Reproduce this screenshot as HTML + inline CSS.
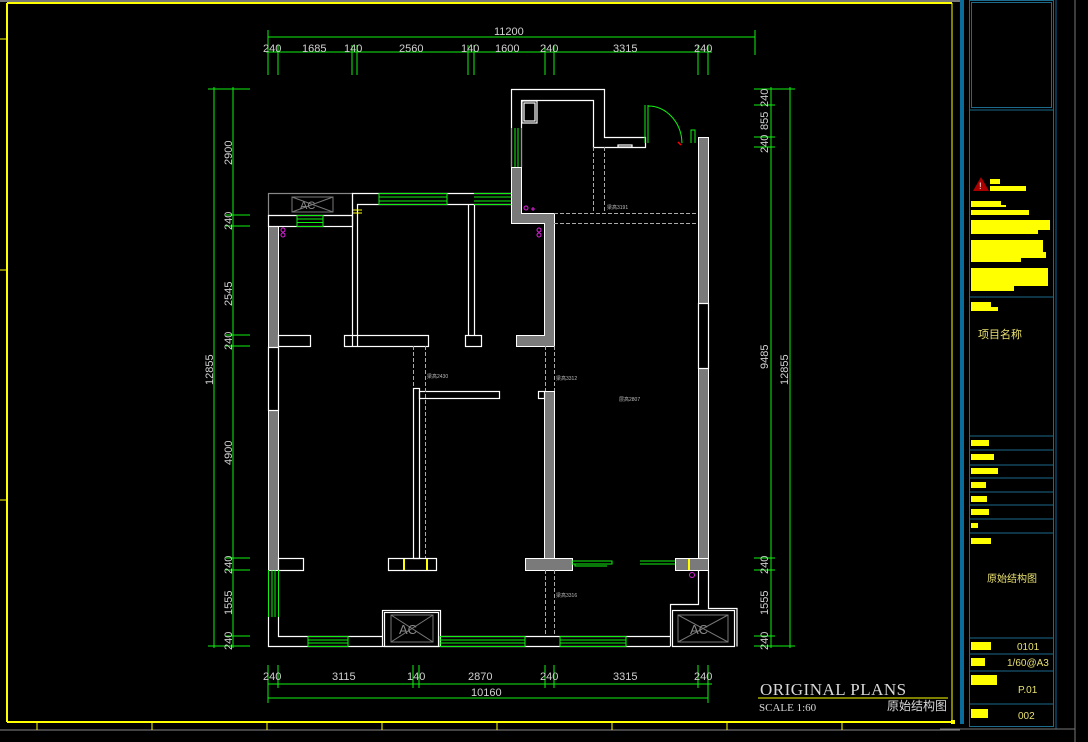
<!DOCTYPE html>
<html><head><meta charset="utf-8"><style>
html,body{margin:0;padding:0;background:#000;width:1088px;height:742px;overflow:hidden}
svg{display:block}
text{font-family:"Liberation Sans","Noto Sans CJK SC",sans-serif}
text.serif{font-family:"Liberation Serif","Noto Serif CJK SC",serif}
</style></head><body>
<svg width="1088" height="742" viewBox="0 0 1088 742" xmlns="http://www.w3.org/2000/svg">
<rect width="1088" height="742" fill="#000"/>
<line x1="0" y1="1" x2="960" y2="1" stroke="#777" stroke-width="2"/>
<line x1="7" y1="3" x2="952" y2="3" stroke="#ffff00" stroke-width="2"/>
<line x1="7" y1="3" x2="7" y2="722" stroke="#ffff00" stroke-width="2"/>
<line x1="7" y1="722" x2="952" y2="722" stroke="#ffff00" stroke-width="2"/>
<line x1="952" y1="3" x2="952" y2="722" stroke="#ffff00" stroke-width="1"/>
<line x1="0" y1="730" x2="960" y2="730" stroke="#888" stroke-width="1"/>
<g stroke="#ffff00" stroke-width="1">
<line x1="37" y1="722" x2="37" y2="730"/><line x1="152" y1="722" x2="152" y2="730"/><line x1="267" y1="722" x2="267" y2="730"/><line x1="382" y1="722" x2="382" y2="730"/><line x1="497" y1="722" x2="497" y2="730"/><line x1="612" y1="722" x2="612" y2="730"/><line x1="727" y1="722" x2="727" y2="730"/><line x1="842" y1="722" x2="842" y2="730"/>
<line x1="0" y1="39" x2="7" y2="39"/><line x1="0" y1="270" x2="7" y2="270"/><line x1="0" y1="500" x2="7" y2="500"/>
</g>
<rect x="960" y="0" width="4" height="724" fill="#0a6c9a"/>
<g fill="none" stroke="#1c6a8c" stroke-width="1">
<rect x="969.5" y="0.5" width="84" height="726"/>
<rect x="971.5" y="2.5" width="80" height="105"/>
<line x1="969" y1="110" x2="1054" y2="110"/>
<line x1="969" y1="297" x2="1054" y2="297"/>
<line x1="969" y1="436" x2="1054" y2="436"/><line x1="969" y1="450" x2="1054" y2="450"/><line x1="969" y1="465" x2="1054" y2="465"/><line x1="969" y1="478" x2="1054" y2="478"/><line x1="969" y1="492" x2="1054" y2="492"/><line x1="969" y1="505" x2="1054" y2="505"/><line x1="969" y1="519" x2="1054" y2="519"/><line x1="969" y1="533" x2="1054" y2="533"/>
<line x1="969" y1="638" x2="1054" y2="638"/><line x1="969" y1="654" x2="1054" y2="654"/><line x1="969" y1="671" x2="1054" y2="671"/><line x1="969" y1="704" x2="1054" y2="704"/>
<line x1="1056" y1="0" x2="1056" y2="729" stroke="#0a6c9a"/>
</g>
<line x1="1075" y1="0" x2="1075" y2="742" stroke="#777"/>
<line x1="940" y1="729" x2="1075" y2="729" stroke="#777"/>
<polygon points="981,177 973,191 989,191" fill="#a00"/>
<text x="979" y="189" font-size="9" fill="#fff">!</text>
<g fill="#ffff00">
<rect x="990" y="179" width="10" height="5"/><rect x="990" y="186" width="36" height="5"/>
<rect x="971" y="201" width="30" height="4"/><rect x="971" y="205" width="35" height="2"/><rect x="971" y="210" width="58" height="5"/>
<rect x="971" y="220" width="79" height="10"/><rect x="971" y="230" width="67" height="4"/>
<rect x="971" y="240" width="72" height="12"/><rect x="971" y="252" width="75" height="6"/><rect x="971" y="258" width="50" height="4"/>
<rect x="971" y="268" width="77" height="12"/><rect x="971" y="280" width="77" height="6"/><rect x="971" y="286" width="43" height="5"/>
<rect x="971" y="302" width="20" height="5"/><rect x="971" y="307" width="27" height="4"/>
<rect x="971" y="440" width="18" height="6"/><rect x="971" y="454" width="23" height="6"/><rect x="971" y="468" width="27" height="6"/><rect x="971" y="482" width="15" height="6"/><rect x="971" y="496" width="16" height="6"/><rect x="971" y="509" width="18" height="6"/><rect x="971" y="523" width="7" height="5"/><rect x="971" y="538" width="20" height="6"/>
<rect x="971" y="642" width="20" height="8"/><rect x="971" y="658" width="14" height="8"/><rect x="971" y="675" width="26" height="10"/><rect x="971" y="709" width="17" height="9"/>
</g>
<g fill="#e8e070" font-size="10">
<text x="978" y="338" font-size="11">项目名称</text>
<text x="987" y="582" font-size="10">原始结构图</text>
<text x="1017" y="650">0101</text>
<text x="1007" y="666">1/60@A3</text>
<text x="1018" y="693">P.01</text>
<text x="1018" y="719">002</text>
</g>
<g stroke="#10f010" stroke-width="1" fill="none">
<line x1="268" y1="37" x2="755" y2="37"/><line x1="268" y1="30" x2="268" y2="55"/><line x1="755" y1="30" x2="755" y2="55"/>
<line x1="266" y1="52" x2="712" y2="52"/>
<path d="M268 45V75M278 45V75M352 45V75M357 45V75M468 45V75M474 45V75M545 45V75M554 45V75M698 45V75M708 45V75"/>
<line x1="268" y1="684" x2="712" y2="684"/><line x1="268" y1="698" x2="708" y2="698"/>
<path d="M268 665V703M278 665V688M413 665V688M419 665V688M545 665V688M554 665V688M698 665V688M708 665V703"/>
<line x1="214" y1="87" x2="214" y2="648"/><line x1="233" y1="87" x2="233" y2="648"/>
<path d="M208 89H250M226 215H250M226 226H250M226 335H250M226 346H250M226 558H250M226 570H250M226 636H250M208 646H250"/>
<line x1="771" y1="87" x2="771" y2="648"/><line x1="790" y1="87" x2="790" y2="648"/>
<path d="M754 89H795M754 105H775M754 137H775M754 147H775M754 558H775M754 570H775M754 636H775M754 646H795"/>
</g>
<g fill="#d0d0d0" font-size="11">
<text x="494" y="35">11200</text>
<text x="263" y="52">240</text><text x="302" y="52">1685</text><text x="344" y="52">140</text><text x="399" y="52">2560</text><text x="461" y="52">140</text><text x="495" y="52">1600</text><text x="540" y="52">240</text><text x="613" y="52">3315</text><text x="694" y="52">240</text>
<text x="263" y="680">240</text><text x="332" y="680">3115</text><text x="407" y="680">140</text><text x="468" y="680">2870</text><text x="540" y="680">240</text><text x="613" y="680">3315</text><text x="694" y="680">240</text>
<text x="471" y="696">10160</text>
<g transform="rotate(-90)">
<text x="-165" y="232">2900</text><text x="-230" y="232">240</text><text x="-306" y="232">2545</text><text x="-350" y="232">240</text><text x="-465" y="232">4900</text><text x="-574" y="232">240</text><text x="-615" y="232">1555</text><text x="-650" y="232">240</text>
<text x="-385" y="213">12855</text>
<text x="-107" y="768">240</text><text x="-130" y="768">855</text><text x="-153" y="768">240</text><text x="-369" y="768">9485</text><text x="-574" y="768">240</text><text x="-615" y="768">1555</text><text x="-650" y="768">240</text>
<text x="-385" y="788">12855</text>
</g>
</g>
<g fill="#7a7a7a" stroke="#fff" stroke-width="1">
<rect x="268.5" y="226.5" width="10" height="121"/>
<rect x="268.5" y="410.5" width="10" height="160"/>
<path d="M511.5 167.5H521.5V213.5H554.5V346.5H516.5V335.5H544.5V223.5H511.5Z"/>
<rect x="698.5" y="137.5" width="10" height="166"/>
<rect x="698.5" y="368.5" width="10" height="202"/>
<rect x="544.5" y="391.5" width="10" height="167"/>
<rect x="525.5" y="558.5" width="47" height="12"/>
<rect x="675.5" y="558.5" width="33" height="12"/>
</g>
<g fill="none" stroke="#fff" stroke-width="1.2">
<path d="M511.5 167.5V89.5H604.5V137.5H645.5V147.5H593.5V100.5H521.5V167.5"/>
<rect x="522" y="101" width="15" height="22"/><rect x="524" y="103" width="11" height="18"/>
<rect x="268.5" y="193.5" width="84" height="22" stroke="#888"/>
<rect x="268.5" y="215.5" width="84" height="11"/>
<path d="M352.5 346V193.5H511.5M357.5 346V204.5H511.5"/>
<path d="M468.5 204V335M474.5 204V335"/>
<rect x="268.5" y="347.5" width="10" height="63"/>
<rect x="278.5" y="335.5" width="32" height="11"/>
<rect x="344.5" y="335.5" width="84" height="11"/>
<rect x="465.5" y="335.5" width="16" height="11"/>
<rect x="698.5" y="303.5" width="10" height="65"/>
<path d="M268.5 617V646.5H382M278.5 617V636.5H382"/>
<path d="M441 646.5H670M441 636.5H670"/>
<path d="M737 646.5H737V608.5H708.5V570M698.5 570V604.5H670.5V646.5"/>
<rect x="382.5" y="610.5" width="58" height="36"/><rect x="384.5" y="612.5" width="54" height="34"/>
<rect x="672.5" y="610.5" width="62" height="36"/>
<rect x="413.5" y="388.5" width="6" height="170"/>
<rect x="419.5" y="391.5" width="80" height="7"/>
<rect x="538.5" y="391.5" width="6" height="7"/>
<rect x="278.5" y="558.5" width="25" height="12"/>
<rect x="388.5" y="558.5" width="48" height="12"/>
<rect x="618" y="145" width="14" height="2"/>
</g>
<g fill="none" stroke="#777" stroke-width="1">
<rect x="292" y="197" width="41" height="15"/><path d="M292 197L333 212M333 197L292 212"/>
<rect x="391" y="615" width="42" height="27"/><path d="M391 615L433 642M433 615L391 642"/>
<rect x="678" y="615" width="50" height="27"/><path d="M678 615L728 642M728 615L678 642"/>
</g>
<g fill="#888" font-size="11"><text x="300" y="209">AC</text><text x="399" y="634" font-size="13">AC</text><text x="690" y="634" font-size="13">AC</text></g>
<g fill="none" stroke="#aaa" stroke-width="1" stroke-dasharray="4,2">
<path d="M593.5 147V213M604.5 147V213M554 213.5H698M554 223.5H698"/>
<path d="M413.5 346V388M425.5 346V558"/>
<path d="M545.5 346V391M554.5 346V391M545.5 570V636M554.5 570V636"/>
</g>
<g fill="#bbb" font-size="5"><text x="607" y="209">梁高3191</text><text x="427" y="378">梁高2430</text><text x="556" y="380">梁高3312</text><text x="619" y="401">层高2807</text><text x="556" y="597">梁高3316</text></g>
<g fill="none" stroke="#10f010" stroke-width="1">
<path d="M511.5 128V167M515 128V167M518 128V167M521.5 128V167"/>
<path d="M297 215.5H323M297 219H323M297 222.5H323M297 226.5H323M297 215V227M323 215V227"/>
<path d="M379 193.5H447M379 197H447M379 201H447M379 204.5H447M379 193V205M447 193V205"/>
<path d="M474 193.5H511M474 197H511M474 201H511M474 204.5H511"/>
<path d="M268.5 570V617M272 570V617M275 570V617M278.5 570V617"/>
<path d="M308 636.5H348M308 640H348M308 643H348M308 646.5H348M308 636V647M348 636V647"/>
<path d="M440 636.5H525M440 640H525M440 643H525M440 646.5H525M440 636V647M525 636V647"/>
<path d="M560 636.5H626M560 640H626M560 643H626M560 646.5H626M560 636V647M626 636V647"/>
<path d="M572 561H612V564H572ZM575 564V566H607"/>
<path d="M640 564H675M640 561H675"/>
<path d="M645 105V143M648 105V143M648 106A34 38 0 0 1 682 143"/>
<path d="M691 143V130H695V143"/>
</g>
<path d="M678 142L681 145" stroke="#f00" stroke-width="1.5"/>
<g stroke="#ffff00" stroke-width="2"><path d="M404 559V570M427 559V570M689 559V570"/></g>
<path d="M353 210H362M353 213H362" stroke="#ffff00" stroke-width="1"/>
<g fill="none" stroke="#e020e0" stroke-width="1">
<circle cx="283" cy="230" r="2"/><circle cx="283" cy="235" r="2"/>
<circle cx="539" cy="230" r="2"/><circle cx="539" cy="235" r="2"/>
<circle cx="526" cy="208" r="2"/><path d="M531 209H535M533 207V211"/>
<circle cx="692" cy="575" r="2.5"/>
</g>
<text class="serif" x="760" y="695" font-size="17" fill="#d8d8d8" letter-spacing="0.5">ORIGINAL PLANS</text>
<line x1="758" y1="698" x2="948" y2="698" stroke="#ffff00" stroke-width="1"/>
<text class="serif" x="759" y="711" font-size="11" fill="#d8d8d8">SCALE   1:60</text>
<text x="887" y="710" font-size="12" fill="#d8d8d8">原始结构图</text>
<rect x="951" y="720" width="4" height="4" fill="#ffff00"/>
</svg>
</body></html>
